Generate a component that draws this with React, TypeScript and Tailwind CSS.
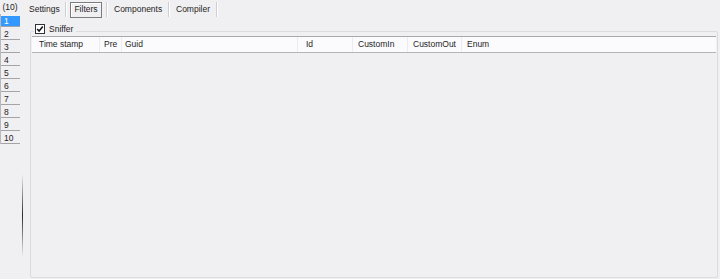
const items = ['1', '2', '3', '4', '5', '6', '7', '8', '9', '10']

const columns = [
  { label: 'Time stamp', w: 'w-[68px]', pl: 'pl-[7px]' },
  { label: 'Pre', w: 'w-[22px]', pl: 'pl-[4px]' },
  { label: 'Guid', w: 'w-[176px]', pl: 'pl-[3px]' },
  { label: 'Id', w: 'w-[55px]', pl: 'pl-[8px]' },
  { label: 'CustomIn', w: 'w-[55px]', pl: 'pl-[5px]' },
  { label: 'CustomOut', w: 'w-[54px]', pl: 'pl-[5px]' },
]

function Sep() {
  return <div className="h-[15px] w-[2px] border-l border-[#cfced2] border-r border-r-white" />
}

export default function App() {
  return (
    <div className="flex h-[279px] w-[720px] overflow-hidden bg-[#f0eff1] font-['Liberation_Sans',Arial,sans-serif] text-[8.5px] leading-none text-[#1e1e1e]">
      {/* left list */}
      <div className="flex w-[24px] shrink-0 flex-col">
        <div className="flex h-[14px] w-[20px] items-center justify-center pt-[1px]">(10)</div>
        <div className="w-[20px] border-l border-[#b9b9bd]">
          {items.map((it, i) => (
            <div key={it} className="h-[13px] border-b border-[#a4a4a8] pt-[2px]">
              <div
                className={
                  i === 0
                    ? 'flex h-[10px] items-center bg-[#3399ff] pl-[3px] text-white'
                    : 'flex h-[10px] items-center pl-[3px]'
                }
              >
                {it}
              </div>
            </div>
          ))}
        </div>
        <div className="ml-[22px] mt-[30px] h-[83px] w-[1px] bg-linear-to-b from-transparent via-[#2a2a2a] to-transparent" />
      </div>

      {/* main */}
      <div className="flex flex-1 flex-col">
        <div className="flex h-[19px] items-center pl-[5px]">
          <span className="w-[36px]">Settings</span>
          <Sep />
          <span className="ml-[3px] flex h-[16px] w-[32px] items-center justify-center border border-[#7c7c80] shadow-[inset_1px_1px_0_#fff]">
            Filters
          </span>
          <span className="ml-[4px]">
            <Sep />
          </span>
          <span className="ml-[6px] w-[47px]">Components</span>
          <span className="ml-[7px]">
            <Sep />
          </span>
          <span className="ml-[6px] w-[33px]">Compiler</span>
          <span className="ml-[7px]">
            <Sep />
          </span>
        </div>

        <div className="relative ml-[6px] mt-[12px] h-[247px] w-[688px] rounded-[2px] border border-[#dcdbdf] px-[1px] pt-[4px]">
          <div className="absolute left-[3px] top-[-8px] flex items-center gap-[4px] bg-[#f0eff1] pl-[1px] pr-[3px]">
            <div className="flex h-[10px] w-[10px] items-center justify-center border border-[#333] bg-white">
              <svg width="8" height="8" viewBox="0 0 8 8">
                <path d="M1.2 4 L3.1 6 L6.8 1.5" fill="none" stroke="#111" strokeWidth="1.5" />
              </svg>
            </div>
            <span>Sniffer</span>
          </div>

          <div className="flex h-[17px] border-y border-t-[#a9a9ad] border-b-[#b4b4b9] bg-[#fbfafc]">
            {columns.map((c) => (
              <div key={c.label} className={`flex items-center border-r border-[#ecebf0] ${c.w} ${c.pl}`}>
                {c.label}
              </div>
            ))}
            <div className="flex items-center pl-[5px]">Enum</div>
          </div>
        </div>
      </div>
    </div>
  )
}
